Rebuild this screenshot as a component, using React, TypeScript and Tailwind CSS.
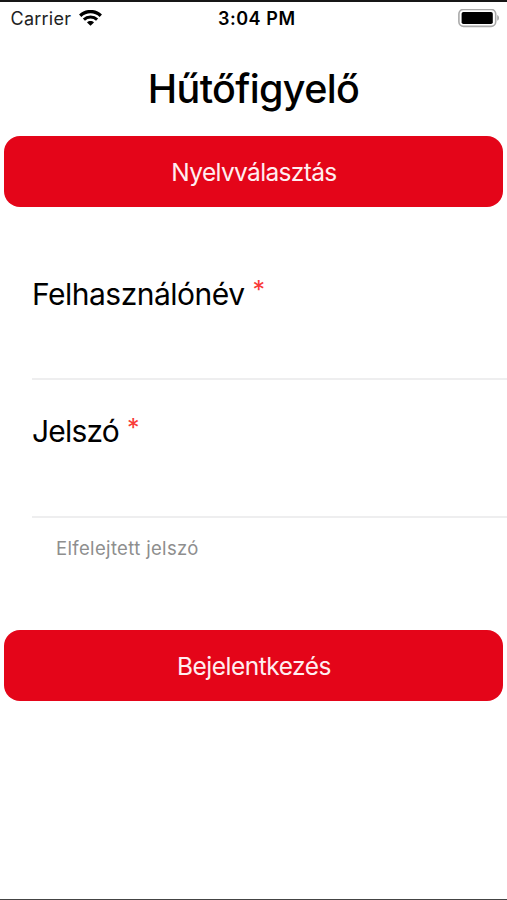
interface FieldProps {
  label: string;
  type: string;
  labelClass: string;
}

function WifiIcon() {
  return (
    <svg className="ml-[8px] h-[17px] w-[23px]" viewBox="0 0 23 17" fill="none">
      <path d="M1.2 5.7C7 0.1 16 0.1 21.8 5.7" stroke="black" strokeWidth="3.3" />
      <path d="M4.9 9.7C8.5 6.2 14.5 6.2 18.1 9.7" stroke="black" strokeWidth="3" />
      <path d="M11.5 15.8L8 12.4C9.9 10.6 13.1 10.6 15 12.4Z" fill="black" />
    </svg>
  );
}

function BatteryIcon() {
  return (
    <svg className="h-[19px] w-[42px]" viewBox="0 0 42 19" fill="none">
      <rect x="0.9" y="0.4" width="36.8" height="17" rx="4.6" stroke="#a9a9a9" strokeWidth="1.6" />
      <rect x="3.6" y="3" width="31.2" height="12" rx="1.8" fill="black" />
      <path d="M39.2 6C41.6 6.8 41.6 11 39.2 11.8Z" fill="#a9a9a9" />
    </svg>
  );
}

function StatusBar() {
  return (
    <div className="grid h-[33px] grid-cols-3 items-center pl-[10.5px] pr-[7px] text-lg leading-6 text-black">
      <div className="flex items-center">
        <span className="tracking-[0.25px] text-[#222]">Carrier</span>
        <WifiIcon />
      </div>
      <span className="pl-[3px] text-center font-semibold tracking-[0.55px] whitespace-nowrap">3:04 PM</span>
      <div className="flex justify-end">
        <BatteryIcon />
      </div>
    </div>
  );
}

function Field({ label, type, labelClass }: FieldProps) {
  return (
    <label className="ml-8 flex h-[138px] flex-col border-b-2 border-[#eeeeef] pt-8">
      <span className="flex text-[30px] leading-10 text-black">
        <span className={labelClass}>{label}</span>
        <span className="-mt-1 ml-2 text-[25px] text-[#f93a37]">*</span>
      </span>
      <input type={type} className="w-full flex-1 bg-transparent text-2xl outline-none" />
    </label>
  );
}

export default function App() {
  return (
    <div className="flex h-[900px] w-[507px] flex-col overflow-hidden border-t-2 border-b border-t-[#161616] border-b-[#444] bg-white font-['Inter',sans-serif]">
      <StatusBar />
      <h1 className="mt-[30px] text-center text-[39.5px] leading-[48px] font-medium tracking-[-0.65px] text-black">
        Hűtőfigyelő
      </h1>

      <button className="mx-1 mt-[23px] h-[71px] rounded-2xl bg-[#e40519] pt-0.5 pl-px text-[24.5px] tracking-[-0.65px] text-[#ffeef0]">
        Nyelvválasztás
      </button>

      <div className="mt-[35px]">
        <Field label="Felhasználónév" type="text" labelClass="tracking-[-0.5px]" />
        <Field label="Jelszó" type="password" labelClass="-mt-px tracking-[-0.8px]" />
      </div>

      <a className="mt-[18px] ml-14 text-[18.5px] leading-6 tracking-[0.35px] text-[#8e8e8e]">Elfelejtett jelszó</a>

      <button className="mx-1 mt-[70px] h-[71px] rounded-2xl bg-[#e40519] pt-0.5 pl-px text-[24.5px] tracking-[-0.5px] text-[#ffeef0]">
        Bejelentkezés
      </button>
    </div>
  );
}
